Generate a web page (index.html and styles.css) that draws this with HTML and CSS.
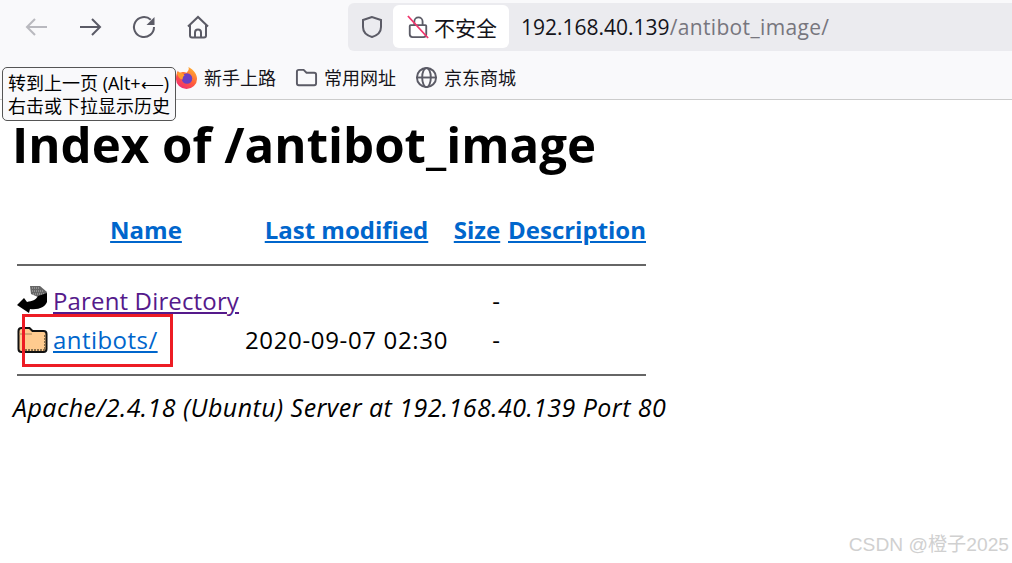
FILE: index.html
```html
<!DOCTYPE html>
<html lang="zh-CN">
<head>
  <meta charset="UTF-8">
  <title>Index of /antibot_image</title>
  <link rel="stylesheet" href="styles.css">
</head>
<body>

<div class="toolbar">
  <div class="nav-icons">
    <svg class="icon back" viewBox="0 0 26 26"><path d="M24 13H4M12 5l-8 8 8 8"/></svg>
    <svg class="icon" viewBox="0 0 26 26"><path d="M3 13h20M15 5l8 8-8 8"/></svg>
    <svg class="icon" viewBox="0 0 26 26"><path d="M23 13a10 10 0 1 1-3.200-7.300"/><path class="solid" d="M23.500 3v8h-8z"/></svg>
    <svg class="icon" viewBox="0 0 26 26"><path d="M3 12.500 13 3l10 9.500M5 10.500V21.500a2 2 0 0 0 2 2h12a2 2 0 0 0 2-2V10.500M10 23.500v-5a3 3 0 0 1 6 0v5"/></svg>
  </div>
  <div class="urlbar">
    <svg class="shield" viewBox="0 0 24 24"><path d="M12 2 3 5v7c0 5 4 8.500 9 10 5-1.500 9-5 9-10V5z"/></svg>
    <div class="insecure">
      <svg class="lock" viewBox="0 0 24 26">
        <path d="M8 11V7a4.500 4.500 0 0 1 9 0v4M4 11h16a1 1 0 0 1 1 1v9a3 3 0 0 1-3 3H6a3 3 0 0 1-3-3v-9a1 1 0 0 1 1-1z"/>
        <path class="slash" d="M1 1l22 24"/>
      </svg>
      <span>不安全</span>
    </div>
    <div class="url">192.168.40.139<span class="url-path">/antibot_image/</span></div>
  </div>
</div>

<div class="bookmarks">
  <div class="bookmark">
    <svg class="bm-icon" viewBox="0 0 24 24">
      <defs>
        <linearGradient id="fox" x1="0.8" y1="0" x2="0.2" y2="1">
          <stop offset="0" stop-color="#ffb52e"/>
          <stop offset="0.55" stop-color="#ff5a3c"/>
          <stop offset="1" stop-color="#f0287a"/>
        </linearGradient>
      </defs>
      <path d="M14 1c6 3 9 8 9 12.500A11 10.500 0 0 1 1 13.500C1 10 2 7 3 5l2 3c2-2 5-2 7-1 2-2 3-4 2-6z" fill="url(#fox)"/>
      <circle cx="12.500" cy="13" r="5.500" fill="#6a3fc4"/>
      <path d="M2 7c3-1 6 0 8 3-2 1-2 3-2 4-3 0-5-3-6-7z" fill="#ff9a2e"/>
    </svg>
    <span>新手上路</span>
  </div>
  <div class="bookmark">
    <svg class="bm-icon outline" viewBox="0 0 24 24"><path d="M2 6a2 2 0 0 1 2-2h5l3 3h8a2 2 0 0 1 2 2v9a2 2 0 0 1-2 2H4a2 2 0 0 1-2-2z"/></svg>
    <span>常用网址</span>
  </div>
  <div class="bookmark">
    <svg class="bm-icon outline" viewBox="0 0 24 24"><circle cx="12" cy="12" r="10"/><ellipse cx="12" cy="12" rx="4.500" ry="10"/><path d="M2 12h20"/></svg>
    <span>京东商城</span>
  </div>
</div>

<div class="tooltip">转到上一页 (Alt+<span class="tip-arrow">⟵</span>)<br>右击或下拉显示历史</div>

<h1>Index of /antibot_image</h1>

<table class="listing">
  <tr class="head">
    <th class="col-icon"></th>
    <th class="col-name"><a href="#">Name</a></th>
    <th class="col-date"><a href="#">Last modified</a></th>
    <th class="col-size"><a href="#">Size</a></th>
    <th class="col-desc"><a href="#">Description</a></th>
  </tr>
  <tr class="rule-row"><th colspan="5"><hr></th></tr>
  <tr class="file-row">
    <td>
      <svg class="file-icon" viewBox="0 0 32 32">
        <path d="M13 1h10l7 6-1 5h-8l-7-3z" fill="#666"/>
        <path d="M15 3h8M15 6h11M16 9h11" fill="none" stroke="#bbb" stroke-dasharray="1 1"/>
        <path d="M0 20 7 13l3 4c5-1 9-2 11-6l9-3v9c-2 5-8 8-17 7l-1 4z" fill="#000"/>
      </svg>
    </td>
    <td><a class="visited" href="#">Parent Directory</a></td>
    <td></td>
    <td class="size">-</td>
    <td></td>
  </tr>
  <tr class="file-row">
    <td>
      <svg class="file-icon" viewBox="0 0 32 32">
        <path d="M1.500 7c0-2 1-3 3-3h8l3 3h11c2 0 3 1 3 3v15c0 2-1 3-3 3h-22c-2 0-3-1-3-3z" fill="#ffcb8f" stroke="#111" stroke-width="2"/>
        <path d="M2 10h13" fill="none" stroke="#a8865a"/>
        <path d="M28 11v15H6" fill="none" stroke="#8a6f4a" stroke-width="2" stroke-dasharray="2 1"/>
      </svg>
    </td>
    <td><a class="folder-link" href="#">antibots/</a></td>
    <td class="date">2020-09-07 02:30</td>
    <td class="size">-</td>
    <td></td>
  </tr>
  <tr class="rule-row"><th colspan="5"><hr></th></tr>
</table>

<address>Apache/2.4.18 (Ubuntu) Server at 192.168.40.139 Port 80</address>

<div class="red-box"></div>
<div class="watermark">CSDN @橙子2025</div>

</body>
</html>
```

FILE: styles.css
```css
html, body { height: 100%; }
body { margin: 0; font-family: "Open Sans", "Noto Sans CJK SC", sans-serif; background: #fff; color: #000; overflow: hidden; }

.toolbar { display: flex; align-items: center; height: 53px; background: #f9f9fb; }
.nav-icons { display: flex; align-items: center; gap: 28px; width: 348px; padding-left: 23px; box-sizing: border-box; }
.icon { width: 26px; height: 26px; fill: none; stroke: #5b5b66; stroke-width: 2; }
.icon.back { opacity: 0.4; }
.icon .solid { fill: #5b5b66; stroke: none; }

.urlbar { display: flex; align-items: center; width: 664px; height: 48px; background: #ebebef; border-radius: 6px 0 0 6px; padding-left: 12px; box-sizing: border-box; }
.shield { width: 24px; height: 24px; fill: none; stroke: #5b5b66; stroke-width: 2; }
.insecure { display: flex; align-items: center; gap: 5px; height: 43px; padding: 0 12px 0 14px; margin-left: 9px; background: #fff; border-radius: 6px; font-size: 21px; color: #15141a; }
.lock { width: 22px; height: 24px; fill: none; stroke: #5b5b66; stroke-width: 2; }
.lock .slash { stroke: #f0356d; }
.url { margin-left: 12px; font-size: 21px; color: #15141a; }
.url-path { color: #77767e; letter-spacing: 0.35px; }

.bookmarks { display: flex; align-items: center; gap: 19px; height: 46px; padding-left: 175px; background: #f9f9fb; border-bottom: 1px solid #ccc; font-size: 18px; color: #15141a; }
.bookmark { display: flex; align-items: center; gap: 6px; padding-top: 2px; }
.bm-icon { width: 23px; height: 23px; }
.bm-icon.outline { fill: none; stroke: #5b5b66; stroke-width: 2; }

.tooltip { position: absolute; left: 2px; top: 67px; width: 174px; height: 54px; border: 1px solid #555; border-radius: 5px; background: #f9f9fb; font-size: 18px; line-height: 22px; padding: 4px 0 0 5px; box-sizing: border-box; white-space: nowrap; }
.tip-arrow { font-size: 16px; }

h1 { margin: 22px 0 0 12px; font-size: 49.200px; line-height: 44px; font-weight: 700; }

.listing { margin: 43px 0 0 14px; width: 635px; table-layout: fixed; border-collapse: separate; border-spacing: 3px 0; font-size: 24px; }
.listing th, .listing td { padding: 0; text-align: left; box-sizing: border-box; }
.listing a { color: #0066cc; }
.listing a.visited { color: #551a8b; letter-spacing: 0.15px; }
.listing a.folder-link { letter-spacing: 0.45px; }
.head { height: 40px; }
.listing .head th { text-align: center; }
.col-icon { width: 33px; }
.listing .col-name { width: 189px; padding-right: 3px; }
.col-date { width: 203px; }
.listing .col-size { width: 54px; padding-right: 2px; }
.col-desc { width: 138px; }
.rule-row { height: 31px; }
.head + .rule-row { height: 32px; }
.rule-row hr { margin: 0; border: 0; border-top: 2px solid #666; }
.file-row { height: 39px; }
.file-icon { display: block; width: 32px; height: 32px; }
.listing .date { text-align: right; letter-spacing: 0.65px; white-space: nowrap; }
.listing .size { text-align: right; padding-right: 5px; }

address { margin: 0 0 0 13px; font-size: 25px; line-height: 34px; letter-spacing: 0.45px; font-style: italic; white-space: nowrap; }

.red-box { position: absolute; left: 22px; top: 314px; width: 151px; height: 53px; border: 3px solid #ed1c24; box-sizing: border-box; }
.watermark { position: absolute; right: 3px; top: 529px; font-size: 19.200px; font-family: "Liberation Sans", "Noto Sans CJK SC", sans-serif; color: #d0d0d0; }
```
